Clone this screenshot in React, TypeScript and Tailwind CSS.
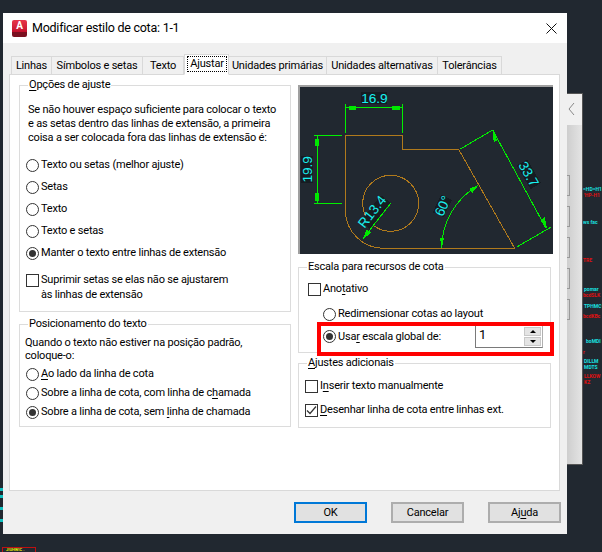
import React from "react";

const U = ({ children }: { children: React.ReactNode }) => <span className="underline underline-offset-2">{children}</span>;

const Radio = ({ on, label }: { on?: boolean; label: React.ReactNode }) => (
  <div className="flex items-center h-[14px] gap-[2px]">
    <span className="flex items-center justify-center w-[13px] h-[13px] rounded-full border border-[#333] bg-white shrink-0">
      {on && <span className="w-[7px] h-[7px] rounded-full bg-[#333]" />}
    </span>
    <span className="whitespace-nowrap">{label}</span>
  </div>
);

const Check = ({ on, label }: { on?: boolean; label: React.ReactNode }) => (
  <div className="flex items-center h-[14px] gap-[2px]">
    <span className="flex items-center justify-center w-[13px] h-[13px] border border-[#333] bg-white shrink-0">
      {on && (
        <svg width="11" height="11" viewBox="0 0 11 11" fill="none" stroke="#333" strokeWidth="1.2">
          <path d="M1 5.5 L4 8.5 L10 1.5" />
        </svg>
      )}
    </span>
    <span className="whitespace-nowrap">{label}</span>
  </div>
);

const Group = ({ title, className, children }: { title: React.ReactNode; className: string; children: React.ReactNode }) => (
  <div className={"relative border border-[#dcdcdc] " + className}>
    <span className="absolute left-[8px] top-[-8px] bg-white px-px leading-[14px] whitespace-nowrap">{title}</span>
    {children}
  </div>
);

const tabs = [
  { t: "Linhas", w: "w-[41px]" },
  { t: "Símbolos e setas", w: "w-[91px]" },
  { t: "Texto", w: "w-[41px]" },
];
const tabsR = [
  { t: "Unidades primárias", w: "w-[98px]" },
  { t: "Unidades alternativas", w: "w-[111px]" },
  { t: "Tolerâncias", w: "w-[64px]" },
];

const Tab = ({ t, w }: { t: string; w: string }) => (
  <div className={"flex items-center justify-center h-[19px] mt-[2px] -mb-px border border-[#d9d9d9] border-l-0 first:border-l bg-[#f0f0f0] whitespace-nowrap " + w}>{t}</div>
);

const Preview = () => (
  <div className="w-[255px] h-[169px] bg-[#212830] border-t-[2px] border-l-[2px] border-[#a0a0a0] shrink-0 overflow-hidden">
    <svg width="253" height="167" viewBox="14 21 759 501" fill="none" strokeWidth="3" shapeRendering="crispEdges">
      <path d="M150 166 H322 V208 H490 L658 505 H265 A115 115 0 0 1 150 395 Z" stroke="#b07a1c" />
      <circle cx="286" cy="370" r="84" stroke="#b07a1c" />
      <g stroke="#00f000">
        <path d="M151 72 V158 M322 72 V158 M151 83 H322" />
        <path d="M55 166 H140 M55 370 H140 M65 166 V370" />
        <path d="M286 370 L203 476" />
        <path d="M549 316 A219 219 0 0 0 439 505" />
        <path d="M495 207 L592 150 M666 500 L766 442 M592 150 L752 445" />
      </g>
      <g fill="#00e800">
        <path d="M160 79 H183 V89 H160 Z M291 79 H314 V89 H291 Z" />
        <path d="M60 178 H71 V197 H60 Z M60 340 H71 V364 H60 Z" />
        <path d="M203 476 L214 448 L229 458 Z" />
        <path d="M549 316 L522 326 L531 339 Z" />
        <path d="M439 505 L434 475 L446 475 Z" />
        <path d="M592 150 L606 182 L595 186 Z M756 448 L735 420 L748 412 Z" />
      </g>
      <g fill="#161c22">
        <rect x="198" y="36" width="78" height="36" />
        <rect x="18" y="228" width="34" height="82" />
        <rect x="190" y="378" width="100" height="36" transform="rotate(-52 240 396)" />
        <rect x="660" y="264" width="82" height="36" transform="rotate(60 700 282)" />
        <rect x="412" y="360" width="58" height="36" transform="rotate(-65 441 378)" />
      </g>
      <g fill="#19f0f0" fontSize="41" fontFamily="'Liberation Sans', sans-serif" textAnchor="middle">
        <text x="237" y="68">16.9</text>
        <text x="0" y="0" transform="translate(49 268) rotate(-90)">19.9</text>
        <text x="0" y="0" transform="translate(241 404) rotate(-52)">R13.4</text>
        <text x="0" y="0" transform="translate(688 289) rotate(60)">33.7</text>
        <text x="0" y="0" transform="translate(455 384) rotate(-65)">60°</text>
      </g>
    </svg>
  </div>
);

const Btn = ({ children, primary }: { children: React.ReactNode; primary?: boolean }) => (
  <div className={"flex items-center justify-center w-[73px] h-[21px] border-2 bg-[#e1e1e1] " + (primary ? "border-[#0078d7]" : "border-[#adadad]")}>{children}</div>
);

const noise: { x: number; y: number; c: string; t: string }[] = [
  { x: 583, y: 186, c: "text-[#19e0e0]", t: "=HD=H1" },
  { x: 584, y: 192, c: "text-[#e01010]", t: "'HP-H1" },
  { x: 583, y: 219, c: "text-[#19e0e0]", t: "ws fac" },
  { x: 583, y: 257, c: "text-[#e01010]", t: "TRE" },
  { x: 584, y: 286, c: "text-[#19e0e0]", t: "pomar" },
  { x: 583, y: 292, c: "text-[#e01010]", t: "bcdSLK" },
  { x: 584, y: 303, c: "text-[#19e0e0]", t: "TPHMC" },
  { x: 583, y: 313, c: "text-[#e01010]", t: "bcdKBc" },
  { x: 586, y: 338, c: "text-[#19e0e0]", t: "boMDI" },
  { x: 583, y: 349, c: "text-[#e01010]", t: "r" },
  { x: 584, y: 358, c: "text-[#19e0e0]", t: "DILLM" },
  { x: 584, y: 364, c: "text-[#19e0e0]", t: "MDTS" },
  { x: 584, y: 373, c: "text-[#e01010]", t: "LLKOW" },
  { x: 584, y: 379, c: "text-[#e01010]", t: "KZ" },
];

export default function App() {
  return (
    <div className="relative w-[602px] h-[552px] overflow-hidden bg-[#212830] text-[11px] tracking-[-0.2px] leading-[14px] text-black font-['Roboto',sans-serif]">
      {noise.map((n, i) => (
        <span key={i} className={"absolute text-[5px] leading-[6px] font-bold tracking-normal whitespace-nowrap " + n.c} style={{ left: n.x, top: n.y }}>{n.t}</span>
      ))}
      <div className="absolute left-[2px] top-[547px] w-[34px] h-[8px] border border-[#c01010] text-[4px] leading-[4px] font-bold text-[#e8e800] pl-[3px] tracking-normal whitespace-nowrap">JIUHWIC .</div>
      <div className="absolute left-[0px] top-[488px] w-[3px] h-[3px] bg-[#10c0c0]" />
      <div className="absolute left-[0px] top-[495px] w-[3px] h-[3px] bg-[#10c0c0]" />
      <div className="absolute left-[0px] top-[507px] w-[3px] h-[3px] bg-[#10c0c0]" />
      <div className="absolute left-[0px] top-[519px] w-[3px] h-[3px] bg-[#10c0c0]" />

      {/* window behind */}
      <div className="absolute left-[560px] top-[93px] w-[23px] h-[372px] flex flex-col border border-[#555] border-l-0 bg-gradient-to-r from-[#c4c4c4] to-[#e4e4e4]">
        <div className="h-[31px] bg-[#f0f0f0] shrink-0" />
      </div>
      <svg className="absolute left-[568px] top-[102px]" width="7" height="14" viewBox="0 0 7 14" fill="none" stroke="#888"><path d="M6 1 L1 7 L6 13" /></svg>
      <div className="absolute left-[567px] top-[175px] w-[3px] h-[21px] border border-l-0 border-[#999]" />
      <div className="absolute left-[567px] top-[206px] w-[3px] h-[21px] border border-l-0 border-[#999]" />
      <div className="absolute left-[567px] top-[237px] w-[3px] h-[21px] border border-l-0 border-[#999]" />
      <div className="absolute left-[567px] top-[268px] w-[3px] h-[21px] border border-l-0 border-[#999]" />
      <div className="absolute left-[567px] top-[299px] w-[3px] h-[21px] border border-l-0 border-[#999]" />

      {/* dialog */}
      <div className="absolute left-[3px] top-[13px] w-[564px] h-[521px] flex flex-col bg-[#f0f0f0]">
        <div className="flex items-center h-[30px] bg-white pl-[9px] pr-[10px] shrink-0">
          <div className="flex flex-col w-[15px] h-[17px] rounded-[2px] overflow-hidden shrink-0">
            <div className="h-[12px] flex items-center justify-center bg-gradient-to-b from-[#e8354a] to-[#c3102d] text-white text-[10px] font-bold leading-none">A</div>
            <div className="flex-1 bg-[#7a1020]" />
          </div>
          <span className="ml-[5px] text-[12.5px] tracking-[-0.25px] whitespace-nowrap">Modificar estilo de cota: 1-1</span>
          <svg className="ml-auto" width="11" height="11" viewBox="0 0 11 11" stroke="#111" fill="none"><path d="M0.5 0.5 L10.5 10.5 M10.5 0.5 L0.5 10.5" /></svg>
        </div>

        <div className="flex items-end h-[18px] mt-[13px] pl-[8px] relative z-10 shrink-0">
          {tabs.map((x) => <Tab key={x.t} {...x} />)}
          <div className="flex items-center justify-center w-[45px] h-[21px] -mb-px border border-[#d9d9d9] border-b-white bg-white pb-[2px]">
            <span className="border border-dotted border-black px-[2px] leading-[14px] ml-[1px]">Ajustar</span>
          </div>
          {tabsR.map((x) => <Tab key={x.t} {...x} />)}
        </div>

        <div className="flex gap-[7px] w-[551px] h-[417px] ml-[6px] pl-[9px] pt-[10px] bg-white border border-[#d9d9d9] shrink-0">
          <div className="flex flex-col w-[272px] gap-[12px]">
            <Group title={<><U>O</U>pções de ajuste</>} className="h-[227px] px-[6px]">
              <p className="pl-[2px] pt-[17px] whitespace-nowrap">Se não houver espaço suficiente para colocar o texto<br />e as setas dentro das linhas de extensão, a primeira<br />coisa a ser colocada fora das linhas de extensão é:</p>
              <div className="flex flex-col gap-[8px] mt-[13px]">
                <Radio label="Texto ou setas (melhor ajuste)" />
                <Radio label="Setas" />
                <Radio label="Texto" />
                <Radio label="Texto e setas" />
                <Radio on label="Manter o texto entre linhas de extensão" />
              </div>
              <div className="mt-[13px]"><Check label="Suprimir setas se elas não se ajustarem" /></div>
              <div className="pl-[15px] mt-px">às linhas de extensão</div>
            </Group>
            <Group title="Posicionamento do texto" className="h-[103px] px-[6px]">
              <p className="pt-[11px] leading-[13px] -ml-px whitespace-nowrap">Quando o texto não estiver na posição padrão,<br />coloque-o:</p>
              <div className="flex flex-col gap-[5px] mt-[5px]">
                <Radio label={<><U>A</U>o lado da linha de cota</>} />
                <Radio label={<>Sobre a linha de cota, com linha de c<U>h</U>amada</>} />
                <Radio on label={<>Sobre a linha de cota, sem <U>l</U>inha de chamada</>} />
              </div>
            </Group>
          </div>

          <div className="flex flex-col w-[255px]">
            <Preview />
            <Group title="Escala para recursos de cota" className="w-[253px] h-[86px] mt-[13px] pl-[9px]">
              <div className="pt-[14px]"><Check label={<>Ano<U>t</U>ativo</>} /></div>
              <div className="pl-[15px] mt-[11px]"><Radio label="Redimensionar cotas ao layout" /></div>
              <div className="flex items-center justify-between pl-[15px] pr-[7px] mt-[4px]">
                <Radio on label={<>Usa<U>r</U> escala global de:</>} />
                <div className="flex items-center justify-between w-[68px] h-[23px] border border-[#7a7a7a] border-r-[#b0b0b0] bg-white pl-[3px] pr-[1px]">
                  <span className="-mt-[3px] text-[13px]">1</span>
                  <div className="flex flex-col gap-px w-[17px]">
                    <div className="flex items-center justify-center h-[9px] bg-[#e4e4e4] border border-[#c8c8c8]"><span className="w-0 h-0 border-x-[3px] border-x-transparent border-b-[3px] border-b-black" /></div>
                    <div className="flex items-center justify-center h-[9px] bg-[#e4e4e4] border border-[#c8c8c8]"><span className="w-0 h-0 border-x-[3px] border-x-transparent border-t-[3px] border-t-black" /></div>
                  </div>
                </div>
              </div>
              <div className="absolute left-[18px] top-[54px] w-[237px] h-[34px] border-[4px] border-[#ff0000]" />
            </Group>
            <Group title={<><U>A</U>justes adicionais</>} className="w-[253px] h-[65px] mt-[10px] pl-[6px]">
              <div className="pt-[15px]"><Check label={<>I<U>n</U>serir texto manualmente</>} /></div>
              <div className="mt-[10px]"><Check on label={<><U>D</U>esenhar linha de cota entre linhas ext.</>} /></div>
            </Group>
          </div>
        </div>

        <div className="flex justify-end gap-[24px] pr-[6px] mt-[11px]">
          <Btn primary>OK</Btn>
          <Btn>Cancelar</Btn>
          <Btn><span>Aj<U>u</U>da</span></Btn>
        </div>
      </div>
    </div>
  );
}
